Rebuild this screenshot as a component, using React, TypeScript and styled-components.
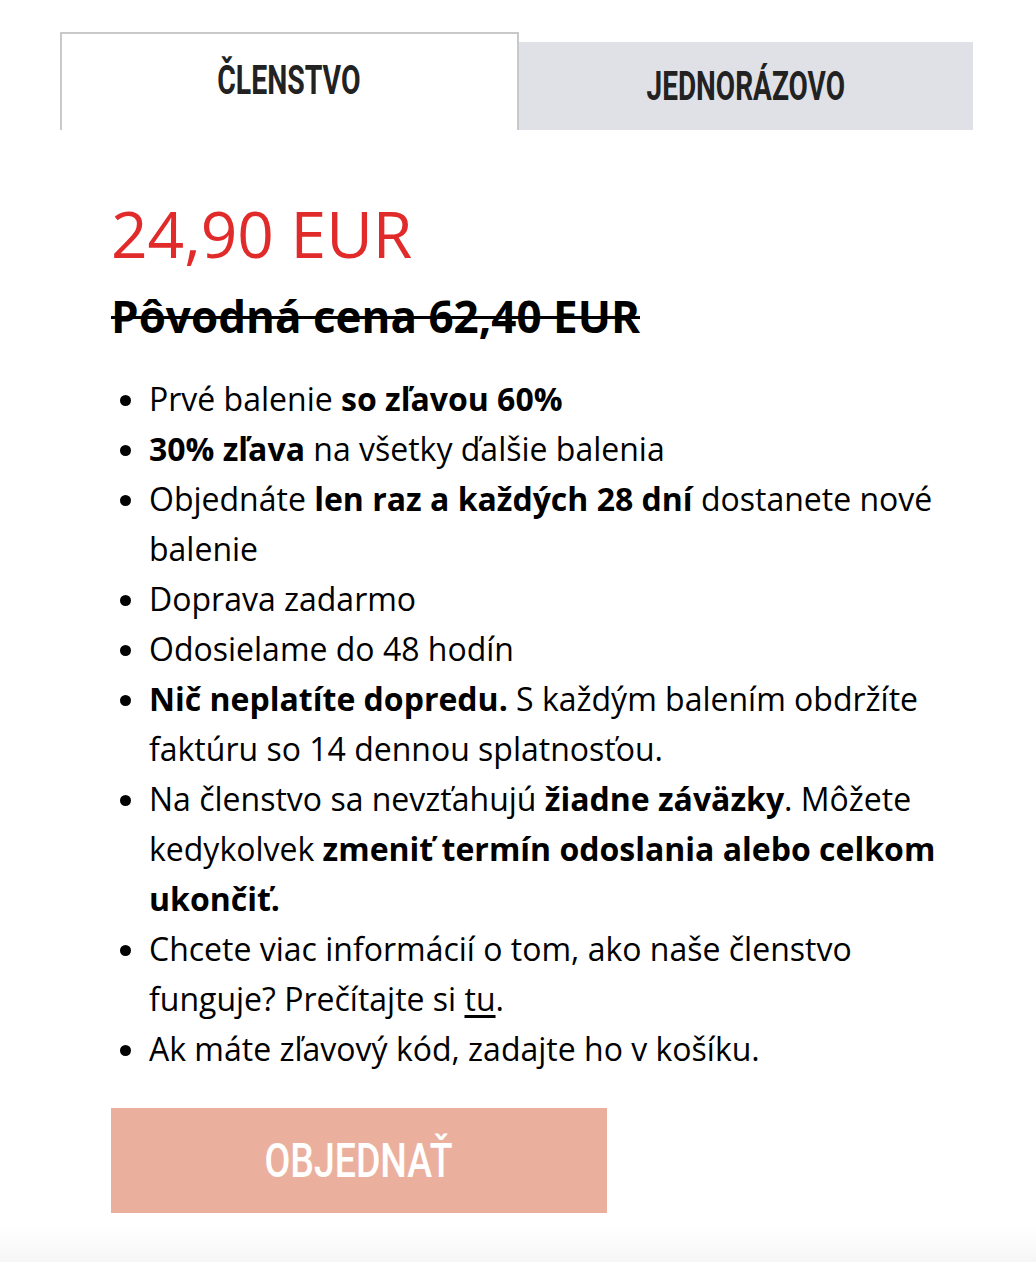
import React from "react";
import styled, { createGlobalStyle } from "styled-components";

const GlobalStyle = createGlobalStyle`
  html, body {
    margin: 0;
    padding: 0;
    background: #ffffff;
  }
  body {
    font-family: "Open Sans", "Liberation Sans", sans-serif;
    color: #000;
  }
`;

// no condensed family is installed, so a narrow look comes from scaling Roboto
const Condensed = styled.span<{ $scale: number }>`
  display: inline-block;
  font-family: Roboto, "Liberation Sans", sans-serif;
  transform: scaleX(${(p) => p.$scale});
  transform-origin: center;
  white-space: nowrap;
`;

const Page = styled.div`
  min-height: 1262px;
  display: flex;
  flex-direction: column;
`;

const Card = styled.div`
  width: 913px;
  margin: 32px 0 0 60px;
`;

const Tabs = styled.div`
  display: flex;
  align-items: flex-end;
`;

const Tab = styled.div<{ $active?: boolean }>`
  box-sizing: border-box;
  flex: 1 1 0;
  display: flex;
  align-items: center;
  justify-content: center;
  font-weight: 700;
  font-size: 40px;
  color: #222;
  height: ${(p) => (p.$active ? "98px" : "88px")};
  background: ${(p) => (p.$active ? "#ffffff" : "#dfe1e6")};
  border: ${(p) => (p.$active ? "2px solid #c9c9c9" : "none")};
  border-bottom: none;
  padding-bottom: ${(p) => (p.$active ? "4px" : "0")};
`;

const Panel = styled.div`
  padding: 66px 0 0 51px;
`;

const Price = styled.div`
  font-size: 64px;
  line-height: 76px;
  color: #e12b2b;
`;

const OldPrice = styled.div`
  margin-top: 18px;
  font-size: 44px;
  line-height: 52px;
  font-weight: 700;
  text-decoration: line-through;
  text-decoration-thickness: 3px;
`;

const Perks = styled.ul`
  margin: 32px 0 0;
  padding-left: 38px;
  font-size: 32px;
  line-height: 50px;

  a {
    color: inherit;
    text-underline-offset: 4px;
  }
`;

const OrderButton = styled.button`
  display: flex;
  align-items: center;
  justify-content: center;
  margin-top: 34px;
  width: 496px;
  height: 105px;
  padding: 0;
  border: none;
  background: #ebb09d;
  color: #fff;
  font-size: 48px;
  font-weight: 500;
  cursor: pointer;
`;

const Fade = styled.div`
  margin-top: auto;
  height: 36px;
  background: linear-gradient(#ffffff, #f6f6f6);
`;

export default function App() {
  return (
    <Page>
      <GlobalStyle />
      <Card>
        <Tabs>
          <Tab $active>
            <Condensed $scale={0.71}>ČLENSTVO</Condensed>
          </Tab>
          <Tab>
            <Condensed $scale={0.7}>JEDNORÁZOVO</Condensed>
          </Tab>
        </Tabs>
        <Panel>
          <Price>24,90 EUR</Price>
          <OldPrice>Pôvodná cena 62,40 EUR</OldPrice>
          <Perks>
            <li>
              Prvé balenie <b>so zľavou 60%</b>
            </li>
            <li>
              <b>30% zľava</b> na všetky ďalšie balenia
            </li>
            <li>
              Objednáte <b>len raz a každých 28 dní</b> dostanete nové balenie
            </li>
            <li>Doprava zadarmo</li>
            <li>Odosielame do 48 hodín</li>
            <li>
              <b>Nič neplatíte dopredu.</b> S každým balením obdržíte faktúru so
              14 dennou splatnosťou.
            </li>
            <li>
              Na členstvo sa nevzťahujú <b>žiadne záväzky</b>. Môžete kedykolvek{" "}
              <b>zmeniť termín odoslania alebo celkom ukončiť.</b>
            </li>
            <li>
              Chcete viac informácií o tom, ako naše členstvo funguje? Prečítajte
              si <a href="#">tu</a>.
            </li>
            <li>Ak máte zľavový kód, zadajte ho v košíku.</li>
          </Perks>
          <OrderButton>
            <Condensed $scale={0.78}>OBJEDNAŤ</Condensed>
          </OrderButton>
        </Panel>
      </Card>
      <Fade />
    </Page>
  );
}
